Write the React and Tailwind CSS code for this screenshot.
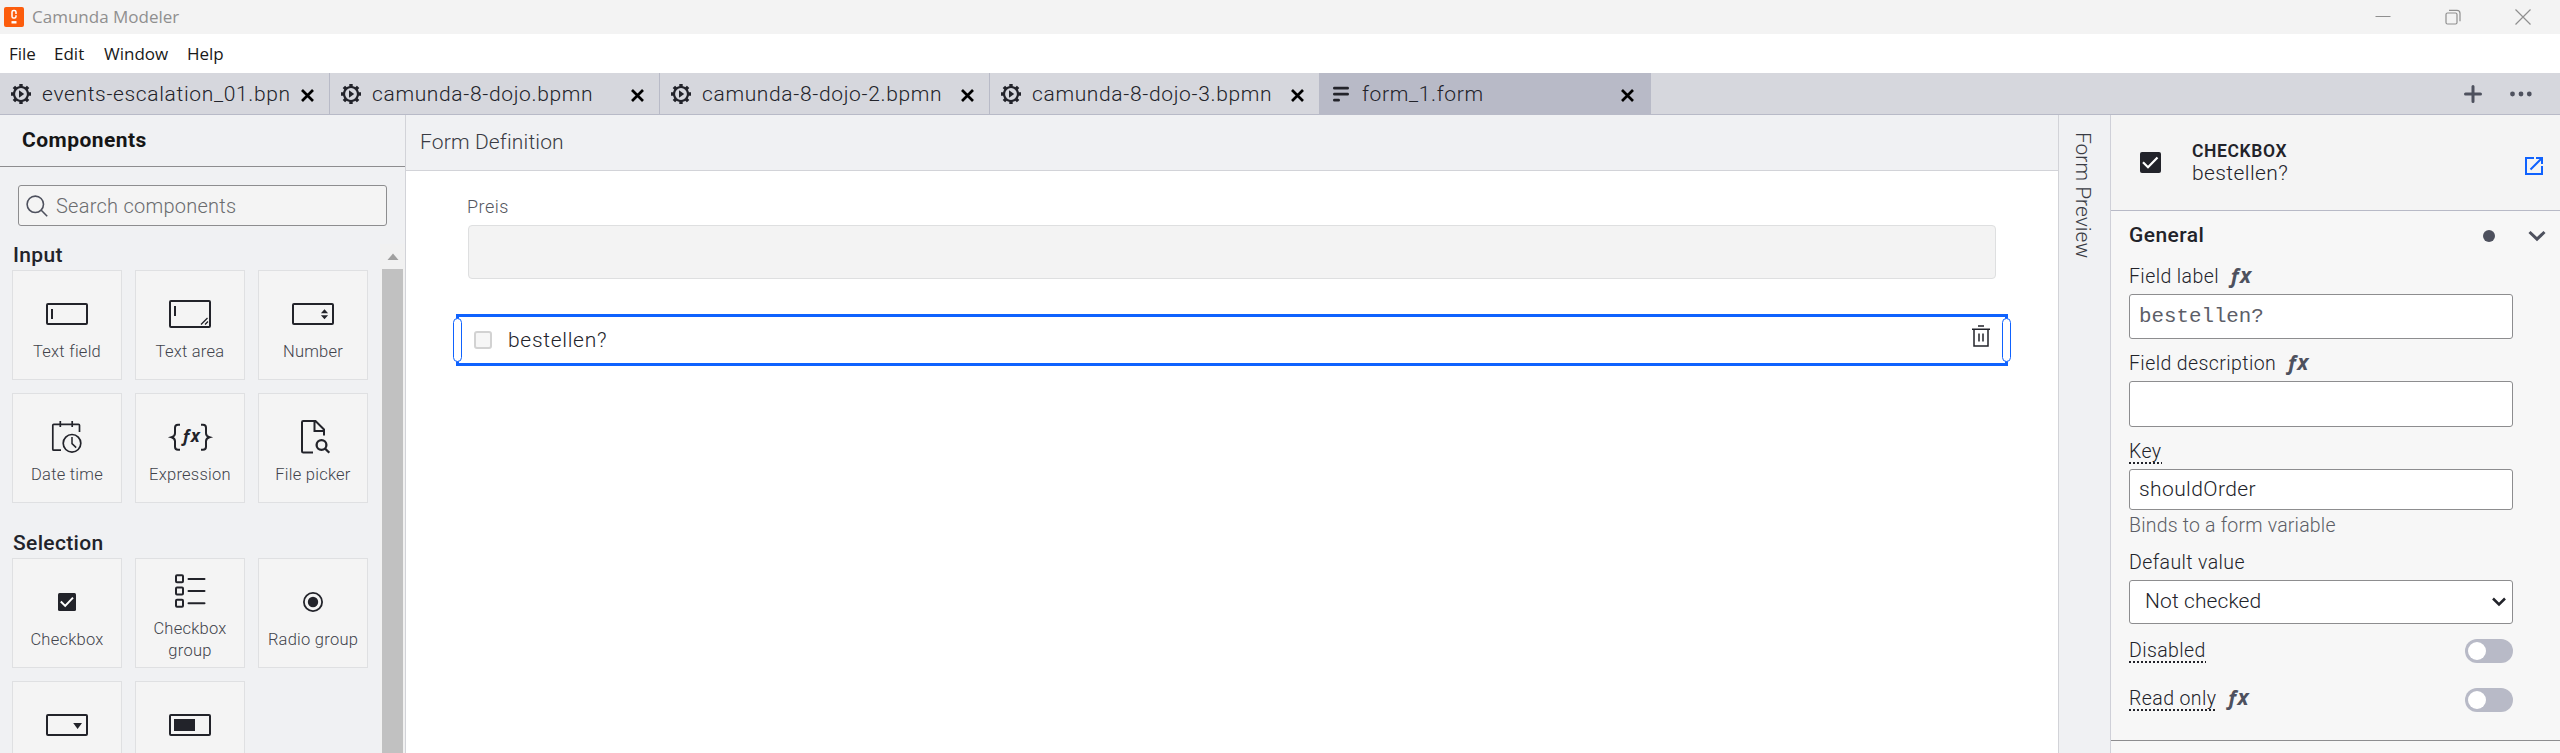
const INK = "#22232a";

function Box({ children }) {
  return (
    <svg width="54" height="54" viewBox="0 0 54 54" fill="none" stroke={INK} strokeWidth="2" className="shrink-0">
      {children}
    </svg>
  );
}

const Frame = () => <rect x="7" y="17" width="40" height="20" rx="1" />;

const icons = {
  text: (
    <Box>
      <Frame />
      <path d="M12 22v10" />
    </Box>
  ),
  area: (
    <Box>
      <rect x="7" y="14" width="40" height="26" rx="1" />
      <path d="M12 19v10" />
      <path d="M38 37.5l6.5-6.5M42 37.5l3-3" strokeWidth="1.3" />
    </Box>
  ),
  number: (
    <Box>
      <Frame />
      <path d="M38.5 22.3l3.6 4h-7.2zM38.5 32.3l3.6-4h-7.2z" fill={INK} stroke="none" />
    </Box>
  ),
  date: (
    <Box>
      <path d="M21 40.2h-7.2q-1 0-1-1V15.3q0-1 1-1h24.7q1 0 1 1V22M20.3 11v6M32.2 11v6" strokeWidth="1.7" />
      <circle cx="32" cy="33.3" r="8.8" strokeWidth="1.7" />
      <path d="M32 27v6.6l4.2 4" strokeWidth="1.5" />
    </Box>
  ),
  expression: (
    <Box>
      <path d="M17 14.7h-2q-3 0-3 3v5.5q0 3-3.5 4q3.5 1 3.5 4v5.5q0 3 3 3h2M38 14.7h2q3 0 3 3v5.5q0 3 3.5 4q-3.5 1-3.5 4v5.5q0 3-3 3h-2" />
      <text x="18.5" y="32" fill={INK} stroke="none" fontSize="17" fontWeight="700" fontStyle="italic" fontFamily="Open Sans, sans-serif">ƒx</text>
    </Box>
  ),
  file: (
    <Box>
      <path d="M27 42.5H17.3q-1.3 0-1.300-1.300V12.300q0-1.300 1.300-1.300H29.500l8.500 8.500V25.500M28.500 11.500V21H38" />
      <circle cx="35.500" cy="35" r="4.900" strokeWidth="2.300" />
      <path d="M39 38.500l4.300 4.300" strokeWidth="2.300" />
    </Box>
  ),
  checkbox: (
    <Box>
      <rect x="18" y="18" width="18" height="18" rx="1.500" fill={INK} stroke="none" />
      <path d="M20.800 26.500l4.400 4.400 7.800-8.300" stroke="#fff" />
    </Box>
  ),
  group: (
    <Box>
      <rect x="13" y="11.300" width="7" height="7" rx="1" />
      <rect x="13" y="23.500" width="7" height="7" rx="1" />
      <rect x="13" y="35.800" width="7" height="7" rx="1" />
      <path d="M25.500 14.900h16M25.500 27h16M25.500 39.300h16" strokeLinecap="round" />
    </Box>
  ),
  radio: (
    <Box>
      <circle cx="27" cy="27" r="9.100" strokeWidth="1.800" />
      <circle cx="27" cy="27" r="5.200" fill={INK} stroke="none" />
    </Box>
  ),
  select: (
    <Box>
      <Frame />
      <path d="M33.200 25h8.800l-4.400 6z" fill={INK} stroke="none" />
    </Box>
  ),
  tags: (
    <Box>
      <Frame />
      <rect x="11" y="21" width="21" height="12" fill={INK} stroke="none" />
    </Box>
  ),
};

function Card({ icon, label }) {
  return (
    <div className="flex h-[110px] w-[110px] flex-col items-center justify-center border border-[#dfe0e2] bg-[#f4f4f4]">
      {icons[icon]}
      <span className="min-h-[22px] w-[96px] text-center text-[16.5px] leading-[22px] tracking-[0.25px] text-[#41434b]">{label}</span>
    </div>
  );
}

function Group({ title, cards }) {
  return (
    <div className="mb-[29px]">
      <h2 className="mb-1 pl-px text-[21px] leading-[22px] font-medium tracking-[0.35px]">{title}</h2>
      <div className="grid w-[356px] grid-cols-3 gap-[13px]">
        {cards.map(([icon, label]) => (
          <Card key={icon} icon={icon} label={label} />
        ))}
      </div>
    </div>
  );
}

function Gear() {
  return (
    <svg width="20" height="20" viewBox="0 0 20 20" className="shrink-0">
      <g stroke={INK} strokeWidth="3.400">
        <path d="M10 0v3M10 17v3M0 10h3M17 10h3M2.900 2.900l2.100 2.100M15 15l2.100 2.100M2.900 17.100l2.100-2.100M15 5l2.100-2.100" />
      </g>
      <circle cx="10" cy="10" r="7" fill="none" stroke={INK} strokeWidth="2.200" />
      <path d="M8 6.200l5.200 3.800-5.200 3.800z" fill={INK} />
    </svg>
  );
}

function FormIcon() {
  return (
    <svg width="20" height="20" viewBox="0 0 20 20" className="shrink-0" stroke={INK} strokeWidth="2.800" strokeLinecap="round">
      <path d="M3.400 4.200h13.200M3.400 10.200h13.200M3.400 16.200h4.200" />
    </svg>
  );
}

function Tab({ name, active }) {
  return (
    <div className={"flex h-full shrink-0 items-center pl-[11px] " + (active ? "w-[331px] bg-[#b8bac7]" : "w-[330px] border-r border-[#b8bac7]")}>
      {active ? <FormIcon /> : <Gear />}
      <span className="ml-[11px] w-[250px] text-[21px] leading-[30px] tracking-[0.65px] whitespace-nowrap">{name}</span>
      <svg width="13" height="13" viewBox="0 0 13 13" className="mt-[3px] ml-[9px] shrink-0" stroke="#000" strokeWidth="2.700">
        <path d="M1 1l11 11M12 1L1 12" />
      </svg>
    </div>
  );
}

function Fx() {
  return <span className="mb-[5px] ml-[10px] font-['Open_Sans',sans-serif] text-[21px] leading-[22px] font-bold tracking-[-0.5px] text-[#4e515e] italic">ƒx</span>;
}

function Label({ children, dotted, fx }) {
  return (
    <div className="flex h-[22px] items-center text-[19.5px] leading-[22px] tracking-[0.4px]">
      <span className={dotted ? "relative" : ""}>
        {children}
        {dotted && <span className="absolute -bottom-px left-0 h-[2px] w-full bg-[repeating-linear-gradient(90deg,#22232a_0_2px,transparent_2px_4px)]" />}
      </span>
      {fx && <Fx />}
    </div>
  );
}

const field = "flex w-[384px] items-center rounded-[3px] border border-[#8d8d8f] bg-white";

function Toggle() {
  return (
    <span className="flex h-6 w-12 items-center rounded-full bg-[#b8bac7] pl-[3px]">
      <span className="h-[18px] w-[18px] rounded-full bg-white" />
    </span>
  );
}

function Handle({ className }) {
  return <span className={"absolute top-[1px] h-[44px] w-[9px] rounded-[5px] border border-[#0f62fe] bg-white " + className} />;
}

export default function App() {
  return (
    <div className="flex h-[753px] w-[2560px] flex-col overflow-hidden bg-white font-['Roboto',sans-serif] font-[350] text-[#22232a]">
      <div className="flex h-[34px] shrink-0 items-center bg-[#f3f3f3] font-['Open_Sans',sans-serif] text-[17px] font-normal text-[#8f8f8f]">
        <svg width="20" height="20" viewBox="0 0 20 20" className="ml-1 shrink-0">
          <rect width="20" height="20" rx="2" fill="#fc5d0d" />
          <path d="M12 7V5q0-1.600-1.600-1.600H9.600Q8 3.400 8 5v4.500q0 1.600 1.600 1.600h.8q1.600 0 1.600-1.600V8.300" fill="none" stroke="#fff" strokeWidth="1.500" />
          <path d="M7.500 15.300h5" stroke="#fff" strokeWidth="2.400" />
        </svg>
        <span className="ml-2">Camunda Modeler</span>
        <div className="mr-[29px] ml-auto flex items-center gap-[54px]">
          <svg width="16" height="16" viewBox="0 0 16 16" stroke="#8f8f8f">
            <path d="M.5 7.500h15" />
          </svg>
          <svg width="16" height="16" viewBox="0 0 16 16" fill="none" stroke="#8f8f8f" strokeWidth="1.200">
            <rect x="1" y="4" width="11" height="11" rx="1.500" />
            <path d="M4 1.300h8q3 0 3 3v8" />
          </svg>
          <svg width="16" height="16" viewBox="0 0 16 16" stroke="#8f8f8f" strokeWidth="1.200">
            <path d="M.5.5l15 15M15.500.5l-15 15" />
          </svg>
        </div>
      </div>

      <div className="flex h-[39px] shrink-0 items-center pl-[9px] font-['Open_Sans',sans-serif] text-[17px] font-normal text-[#191919]">
        <span className="w-[45px]">File</span>
        <span className="w-[50px]">Edit</span>
        <span className="w-[83px]">Window</span>
        <span>Help</span>
      </div>

      <div className="flex h-[42px] shrink-0 items-center border-b border-[#b8bac7] bg-[#d6d7dd]">
        <Tab name="events-escalation_01.bpn" />
        <Tab name="camunda-8-dojo.bpmn" />
        <Tab name="camunda-8-dojo-2.bpmn" />
        <Tab name="camunda-8-dojo-3.bpmn" />
        <Tab name="form_1.form" active />
        <div className="mr-[28px] ml-auto flex items-center gap-[27px]">
          <svg width="20" height="20" viewBox="0 0 20 20" stroke="#4e515e" strokeWidth="3" strokeLinecap="round">
            <path d="M10 2.500v15M2.500 10h15" />
          </svg>
          <svg width="22" height="20" viewBox="0 0 22 20" fill="#4e515e">
            <circle cx="2.500" cy="10" r="2.400" />
            <circle cx="11" cy="10" r="2.400" />
            <circle cx="19.300" cy="10" r="2.400" />
          </svg>
        </div>
      </div>

      <div className="flex min-h-0 flex-1">
        <aside className="flex w-[406px] shrink-0 flex-col border-r border-[#d2d3d8] bg-[#f0f1f3]">
          <div className="flex h-[52px] shrink-0 items-center border-b border-[#8d8d8f] pl-[22px] text-[21px] font-bold tracking-[0.45px] text-[#161616]">Components</div>
          <div className="mx-[18px] mt-[18px] flex h-[41px] w-[369px] shrink-0 items-center rounded-[3px] border border-[#8d8d8f] bg-[#f4f4f4] pl-[7px] text-[20px] tracking-[0.25px] text-[#6b6c6f]">
            <svg width="22" height="22" viewBox="0 0 22 22" fill="none" stroke="#4e515e" strokeWidth="1.600" className="mr-[8px]">
              <circle cx="9.300" cy="9.300" r="8.200" />
              <path d="M15 15l6.200 6.200" />
            </svg>
            Search components
          </div>
          <div className="mt-[18px] flex min-h-0 flex-1">
            <div className="w-[380px] overflow-hidden pl-3">
              <Group
                title="Input"
                cards={[
                  ["text", "Text field"],
                  ["area", "Text area"],
                  ["number", "Number"],
                  ["date", "Date time"],
                  ["expression", "Expression"],
                  ["file", "File picker"],
                ]}
              />
              <Group
                title="Selection"
                cards={[
                  ["checkbox", "Checkbox"],
                  ["group", "Checkbox group"],
                  ["radio", "Radio group"],
                  ["select", ""],
                  ["tags", ""],
                ]}
              />
            </div>
            <div className="flex w-[25px] flex-col items-center bg-[#f1f1f1]">
              <svg width="12" height="25" viewBox="0 0 12 25" className="shrink-0">
                <path d="M6 9.500l5.500 6.500H.5z" fill="#a0a0a0" />
              </svg>
              <div className="w-[21px] flex-1 bg-[#c1c1c1]" />
            </div>
          </div>
        </aside>

        <main className="flex flex-1 flex-col">
          <div className="flex h-[56px] shrink-0 items-center border-b border-[#d2d3d8] bg-[#f0f1f3] pl-[14px] text-[21px] tracking-[0.15px] text-[#393b43]">Form Definition</div>
          <div className="flex flex-col px-[50px] pt-[25px]">
            <div className="ml-[11px] text-[18px] leading-[22px] tracking-[0.5px] text-[#55575f]">Preis</div>
            <div className="mt-[7px] mr-[12px] ml-[12px] h-[54px] rounded-[4px] border border-[#dedfe0] bg-[#f3f3f3]" />
            <div className="relative mt-[35px] flex h-[52px] items-center border-[3px] border-[#0f62fe] pr-[14px] pl-[15px]">
              <Handle className="-left-[6px]" />
              <span className="h-[18px] w-[18px] rounded-[3px] border-2 border-[#d2d2d2] bg-[#f6f6f6]" />
              <span className="ml-[16px] text-[21px] leading-[24px] tracking-[0.7px]">bestellen?</span>
              <svg width="20" height="22" viewBox="0 0 20 22" fill="none" stroke={INK} strokeWidth="1.500" className="mb-[9px] ml-auto">
                <path d="M7 1h6M1 4.200h18M3 4.200V21h14V4.200M8 8.500v8M12 8.500v8" />
              </svg>
              <Handle className="-right-[6px]" />
            </div>
          </div>
        </main>

        <div className="flex w-[52px] shrink-0 justify-center border-l border-[#d2d3d8] bg-[#f0f1f3] pt-[17px] pr-[3px]">
          <span className="text-[21px] leading-[30px] text-[#393b43] [writing-mode:vertical-rl]">Form Preview</span>
        </div>

        <aside className="flex w-[450px] shrink-0 flex-col border-l border-[#cfd0d8] bg-[#f7f7f7]">
          <div className="flex h-[96px] shrink-0 items-center border-b border-[#b8bac7] bg-[#f4f4f4] pr-[16px] pl-[29px]">
            <svg width="21" height="21" viewBox="0 0 21 21">
              <rect width="21" height="21" rx="2" fill={INK} />
              <path d="M3 10.200l5 5 9.500-9.800" fill="none" stroke="#fff" strokeWidth="2.200" />
            </svg>
            <div className="-mt-[1px] ml-[31px]">
              <div className="text-[17.5px] leading-[22px] font-semibold tracking-[0.6px]">CHECKBOX</div>
              <div className="text-[21px] leading-[22px] tracking-[0.4px]">bestellen?</div>
            </div>
            <svg width="20" height="20" viewBox="0 0 20 20" fill="none" stroke="#0f62fe" strokeWidth="2" className="mt-[7px] ml-auto">
              <path d="M10 2H2v16h16v-8M12 2h6v6M18 2L6.500 13.500" />
            </svg>
          </div>

          <div className="flex h-[49px] shrink-0 items-center pr-[14px] pl-[18px]">
            <span className="text-[21px] font-medium tracking-[0.45px]">General</span>
            <span className="ml-auto h-3 w-3 rounded-full bg-[#4e515e]" />
            <svg width="18" height="12" viewBox="0 0 18 12" fill="none" stroke="#4e515e" strokeWidth="3" className="ml-[33px]">
              <path d="M1.500 2l7.500 7.200L16.500 2" />
            </svg>
          </div>

          <div className="flex h-[481px] shrink-0 flex-col border-b border-[#8d8d8f] pt-[6px] pl-[18px]">
            <Label fx>Field label</Label>
            <div className={field + " mt-[6px] h-[45px] pl-[9px] font-['Liberation_Mono',monospace] text-[20.8px] text-[#5c5e68]"}>bestellen?</div>
            <div className="mt-[14px]">
              <Label fx>Field description</Label>
            </div>
            <div className={field + " mt-[6px] h-[46px]"} />
            <div className="mt-[14px]">
              <Label dotted>Key</Label>
            </div>
            <div className={field + " mt-[6px] h-[41px] pl-[9px] text-[21px] tracking-[0.4px]"}>shouldOrder</div>
            <div className="mt-[5px] text-[19.5px] leading-[22px] tracking-[0.2px] text-[#5c5e66]">Binds to a form variable</div>
            <div className="mt-[15px]">
              <Label>Default value</Label>
            </div>
            <div className={field + " mt-[6px] h-[44px] justify-between pr-[6px] pl-[15px] text-[21px] tracking-[0.1px]"}>
              Not checked
              <svg width="14" height="10" viewBox="0 0 14 10" fill="none" stroke="#22232a" strokeWidth="2.500">
                <path d="M1 1.500l6 6 6-6" />
              </svg>
            </div>
            <div className="mt-[15px] flex w-[384px] items-center justify-between">
              <Label dotted>Disabled</Label>
              <Toggle />
            </div>
            <div className="mt-[25px] flex h-6 w-[384px] items-start justify-between">
              <Label dotted fx>Read only</Label>
              <Toggle />
            </div>
          </div>
        </aside>
      </div>
    </div>
  );
}
